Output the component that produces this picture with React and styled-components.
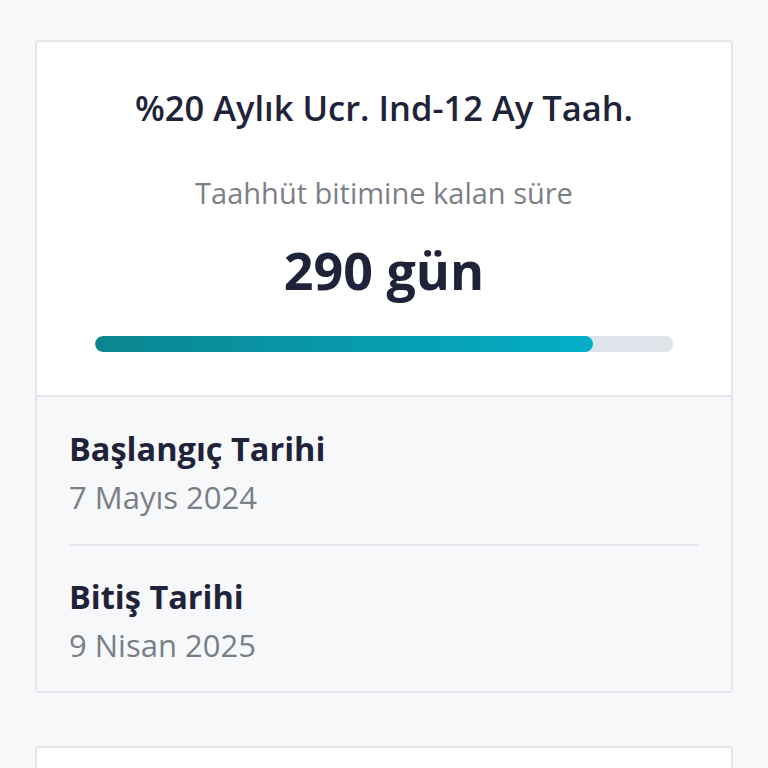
import React from "react";
import styled, { createGlobalStyle } from "styled-components";

const Global = createGlobalStyle`
  html, body { margin: 0; padding: 0; background: #f7f8fa; }
  body { font-family: "Open Sans", "Noto Sans", sans-serif; }
`;

const Page = styled.div`
  display: flex;
  flex-direction: column;
  gap: 53px;
  padding: 40px 35px 0 35px;
  height: 768px;
  box-sizing: border-box;
  overflow: hidden;
`;

const Card = styled.div`
  border: 2px solid #e3e5ea;
  border-radius: 4px;
  background: #ffffff;
  overflow: hidden;
  flex-shrink: 0;
`;

const Top = styled.div`
  background: #ffffff;
  display: flex;
  flex-direction: column;
  align-items: center;
  padding: 46px 58px 43px;
  border-bottom: 2px solid #e3e5ea;
`;

const Title = styled.div`
  font-size: 34.5px;
  font-weight: 600;
  color: #1f2339;
  line-height: 40px;
`;

const Subtitle = styled.div`
  margin-top: 47px;
  font-size: 29px;
  color: #7a7f87;
  line-height: 36px;
`;

const Big = styled.div`
  margin-top: 29px;
  font-size: 52px;
  font-weight: 700;
  color: #1f2339;
  line-height: 60px;
`;

const Track = styled.div`
  margin-top: 36px;
  width: 100%;
  height: 16px;
  border-radius: 8px;
  background: #dfe3ea;
  overflow: hidden;
`;

const Fill = styled.div`
  height: 100%;
  border-radius: 8px;
  background: linear-gradient(90deg, #0b8590 0%, #05aec8 100%);
`;

const Bottom = styled.div`
  background: #f7f8fa;
  padding: 0 32px;
`;

const Row = styled.div`
  padding: ${(p) => (p.$first ? "32px" : "31px")} 0 ${(p) => (p.$first ? "27px" : "26px")};
  display: flex;
  flex-direction: column;
  gap: 8px;
  & + & {
    border-top: 2px solid #e3e5ea;
  }
`;

const Label = styled.div`
  font-size: 32.5px;
  font-weight: 700;
  color: #1f2339;
  line-height: 40px;
`;

const Value = styled.div`
  font-size: 31px;
  color: #7a7f87;
  line-height: 40px;
`;

const EmptyCard = styled(Card)`
  height: 60px;
`;

export default function App() {
  const pct = 86.2;
  return (
    <>
      <Global />
      <Page>
        <Card>
          <Top>
            <Title>%20 Aylık Ucr. Ind-12 Ay Taah.</Title>
            <Subtitle>Taahhüt bitimine kalan süre</Subtitle>
            <Big>290 gün</Big>
            <Track>
              <Fill style={{ width: `${pct}%` }} />
            </Track>
          </Top>
          <Bottom>
            <Row $first>
              <Label>Başlangıç Tarihi</Label>
              <Value>7 Mayıs 2024</Value>
            </Row>
            <Row>
              <Label>Bitiş Tarihi</Label>
              <Value>9 Nisan 2025</Value>
            </Row>
          </Bottom>
        </Card>
        <EmptyCard />
      </Page>
    </>
  );
}
